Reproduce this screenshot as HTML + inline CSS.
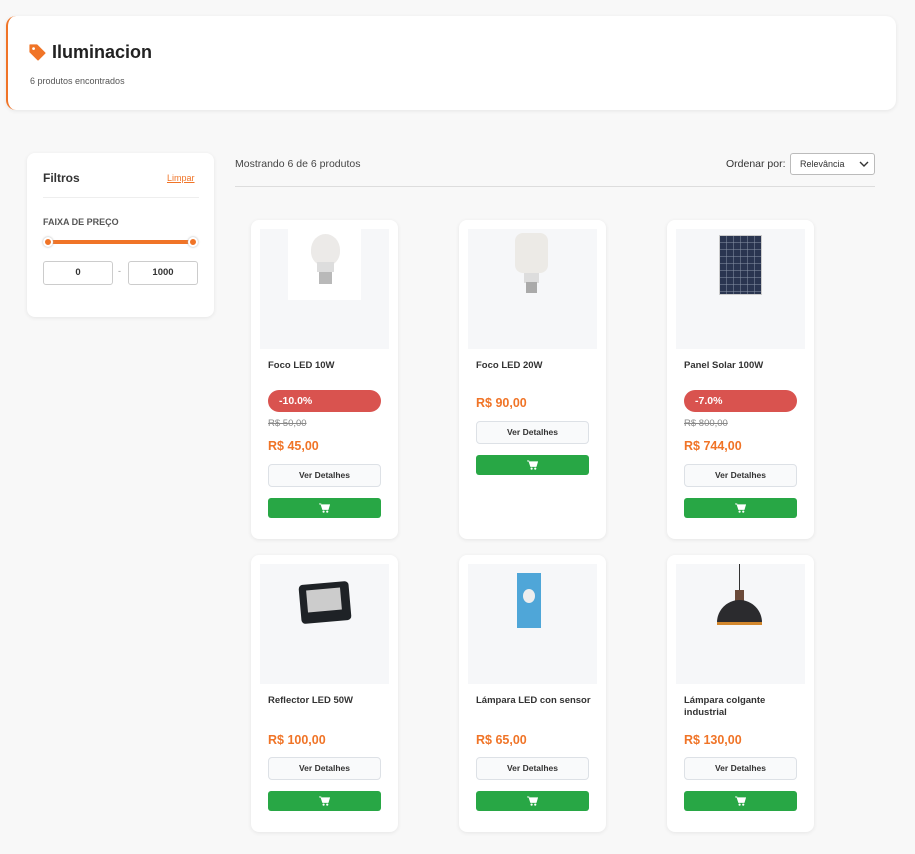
<!DOCTYPE html>
<html><head><meta charset="utf-8"><style>
*{box-sizing:border-box;margin:0;padding:0}
body{width:915px;height:854px;background:#f8f8f8;font-family:"Liberation Sans",Arial,sans-serif;position:relative;overflow:hidden;color:#333}
.abs{position:absolute}
.hdr{left:6px;top:16px;width:890px;height:94px;background:#fff;border-radius:10px;border-left:2px solid #f07427;box-shadow:0 1px 4px rgba(0,0,0,.08)}
.side{left:27px;top:153px;width:187px;height:164px;background:#fff;border-radius:8px;box-shadow:0 1px 4px rgba(0,0,0,.08)}
.card{position:absolute;width:147px;background:#fff;border-radius:8px;box-shadow:0 1px 4px rgba(0,0,0,.08)}
.img{position:absolute;left:9px;top:9px;width:129px;height:120px;background:#f6f7f9;overflow:hidden}
.name{position:absolute;left:17px;font-size:9.5px;font-weight:bold;color:#333;line-height:12px;width:115px}
.badge{position:absolute;left:17px;width:113px;height:22px;border-radius:11px;background:#d9534f;color:#fff;font-weight:bold;font-size:10.5px;line-height:22px;padding-left:11px}
.old{position:absolute;left:17px;font-size:9.5px;color:#888;text-decoration:line-through}
.price{position:absolute;left:17px;font-size:12.5px;font-weight:bold;color:#f07427}
.ver{position:absolute;left:17px;width:113px;height:23px;border:1px solid #dde1e6;border-radius:4px;background:#f9fafb;font-size:8.5px;font-weight:bold;text-align:center;line-height:21px;color:#333}
.cart{position:absolute;left:17px;width:113px;height:20px;border-radius:3px;background:#28a745;display:flex;align-items:center;justify-content:center}
</style></head><body>
<div class="abs hdr">
 <svg class="abs" style="left:21px;top:28px" width="17" height="17" viewBox="0 0 16 16"><path d="M1 1h6.5l7.5 7.5-6.5 6.5L1 7.5z" fill="#f07427" stroke="#f07427" stroke-linejoin="round" stroke-width="1.2"/><circle cx="4.3" cy="4.3" r="1.3" fill="#fff"/></svg>
 <div class="abs" style="left:44px;top:26px;font-size:18px;font-weight:bold;color:#222">Iluminacion</div>
 <div class="abs" style="left:22px;top:60px;font-size:9px;color:#555">6 produtos encontrados</div>
</div>
<div class="abs side">
 <div class="abs" style="left:16px;top:18px;font-size:12px;font-weight:bold;color:#333">Filtros</div>
 <div class="abs" style="left:140px;top:20px;font-size:9px;color:#f07427;text-decoration:underline">Limpar</div>
 <div class="abs" style="left:16px;top:44px;width:156px;height:1px;background:#eee"></div>
 <div class="abs" style="left:16px;top:64px;font-size:9px;font-weight:bold;color:#555">FAIXA DE PREÇO</div>
 <div class="abs" style="left:20px;top:87px;width:146px;height:4px;background:#f07427;border-radius:2px"></div>
 <div class="abs" style="left:16px;top:84px;width:10px;height:10px;border-radius:50%;background:#f07427;border:2px solid #fff;box-shadow:0 0 2px #aaa"></div>
 <div class="abs" style="left:161px;top:84px;width:10px;height:10px;border-radius:50%;background:#f07427;border:2px solid #fff;box-shadow:0 0 2px #aaa"></div>
 <div class="abs" style="left:16px;top:108px;width:70px;height:24px;border:1px solid #ccc;border-radius:3px;font-size:9.5px;font-weight:bold;text-align:center;line-height:22px">0</div>
 <div class="abs" style="left:91px;top:113px;font-size:9px;color:#999">-</div>
 <div class="abs" style="left:101px;top:108px;width:70px;height:24px;border:1px solid #ccc;border-radius:3px;font-size:9.5px;font-weight:bold;text-align:center;line-height:22px">1000</div>
</div>
<div class="abs" style="left:235px;top:158px;font-size:10.5px;color:#444">Mostrando 6 de 6 produtos</div>
<div class="abs" style="left:726px;top:158px;font-size:10.5px;color:#333">Ordenar por:</div>
<div class="abs" style="left:790px;top:153px;width:85px;height:22px;border:1px solid #bbb;border-radius:3px;background:#fff;font-size:9px;line-height:20px;padding-left:9px">Relevância
<svg class="abs" style="right:5px;top:6px" width="10" height="8" viewBox="0 0 10 8"><path d="M1 2l4 4 4-4" stroke="#333" stroke-width="1.4" fill="none"/></svg></div>
<div class="abs" style="left:235px;top:186px;width:640px;height:1px;background:#ddd"></div>

<!-- Row 1 -->
<div class="card" style="left:251px;top:220px;height:319px">
 <div class="img"><div class="abs" style="left:28px;top:0;width:73px;height:71px;background:#fff"></div>
  <div class="abs" style="left:51px;top:5px;width:29px;height:32px;border-radius:50% 50% 45% 45%;background:#eceae8"></div>
  <div class="abs" style="left:57px;top:33px;width:17px;height:10px;background:#ddd"></div>
  <div class="abs" style="left:59px;top:43px;width:13px;height:12px;background:#b9b9b9"></div></div>
 <div class="name" style="top:140px">Foco LED 10W</div>
 <div class="badge" style="top:170px">-10.0%</div>
 <div class="old" style="top:198px">R$ 50,00</div>
 <div class="price" style="top:219px">R$ 45,00</div>
 <div class="ver" style="top:244px">Ver Detalhes</div>
 <div class="cart" style="top:278px"><svg width="11" height="10" viewBox="0 0 12 11"><path d="M0 1h2l2 6h6l1.5-5H3" fill="#fff" stroke="#fff"/><circle cx="5" cy="9.5" r="1.2" fill="#fff"/><circle cx="9" cy="9.5" r="1.2" fill="#fff"/></svg></div>
</div>
<div class="card" style="left:459px;top:220px;height:319px">
 <div class="img"><div class="abs" style="left:47px;top:4px;width:33px;height:40px;border-radius:8px;background:#eceae6"></div>
  <div class="abs" style="left:56px;top:44px;width:15px;height:10px;background:#ddd"></div>
  <div class="abs" style="left:58px;top:53px;width:11px;height:11px;background:#aaa"></div></div>
 <div class="name" style="top:140px">Foco LED 20W</div>
 <div class="price" style="top:176px">R$ 90,00</div>
 <div class="ver" style="top:201px">Ver Detalhes</div>
 <div class="cart" style="top:235px"><svg width="11" height="10" viewBox="0 0 12 11"><path d="M0 1h2l2 6h6l1.5-5H3" fill="#fff" stroke="#fff"/><circle cx="5" cy="9.5" r="1.2" fill="#fff"/><circle cx="9" cy="9.5" r="1.2" fill="#fff"/></svg></div>
</div>
<div class="card" style="left:667px;top:220px;height:319px">
 <div class="img"><div class="abs" style="left:43px;top:6px;width:43px;height:60px;background:#2a3550;border:1px solid #ccc;background-image:linear-gradient(90deg,transparent 6px,#8a95a8 1px,transparent 7px),linear-gradient(transparent 6px,#8a95a8 1px,transparent 7px);background-size:7px 7px"></div></div>
 <div class="name" style="top:140px">Panel Solar 100W</div>
 <div class="badge" style="top:170px">-7.0%</div>
 <div class="old" style="top:198px">R$ 800,00</div>
 <div class="price" style="top:219px">R$ 744,00</div>
 <div class="ver" style="top:244px">Ver Detalhes</div>
 <div class="cart" style="top:278px"><svg width="11" height="10" viewBox="0 0 12 11"><path d="M0 1h2l2 6h6l1.5-5H3" fill="#fff" stroke="#fff"/><circle cx="5" cy="9.5" r="1.2" fill="#fff"/><circle cx="9" cy="9.5" r="1.2" fill="#fff"/></svg></div>
</div>

<!-- Row 2 -->
<div class="card" style="left:251px;top:555px;height:277px">
 <div class="img"><div class="abs" style="left:40px;top:19px;width:50px;height:39px;background:#1e2226;border-radius:4px;transform:rotate(-5deg)"></div>
  <div class="abs" style="left:47px;top:25px;width:34px;height:22px;background:#ccc;transform:rotate(-5deg)"></div></div>
 <div class="name" style="top:140px">Reflector LED 50W</div>
 <div class="price" style="top:178px">R$ 100,00</div>
 <div class="ver" style="top:202px">Ver Detalhes</div>
 <div class="cart" style="top:236px"><svg width="11" height="10" viewBox="0 0 12 11"><path d="M0 1h2l2 6h6l1.5-5H3" fill="#fff" stroke="#fff"/><circle cx="5" cy="9.5" r="1.2" fill="#fff"/><circle cx="9" cy="9.5" r="1.2" fill="#fff"/></svg></div>
</div>
<div class="card" style="left:459px;top:555px;height:277px">
 <div class="img"><div class="abs" style="left:49px;top:9px;width:24px;height:55px;background:#4fa6d8"></div>
  <div class="abs" style="left:55px;top:25px;width:12px;height:14px;border-radius:50%;background:#eee"></div></div>
 <div class="name" style="top:140px">Lámpara LED con sensor</div>
 <div class="price" style="top:178px">R$ 65,00</div>
 <div class="ver" style="top:202px">Ver Detalhes</div>
 <div class="cart" style="top:236px"><svg width="11" height="10" viewBox="0 0 12 11"><path d="M0 1h2l2 6h6l1.5-5H3" fill="#fff" stroke="#fff"/><circle cx="5" cy="9.5" r="1.2" fill="#fff"/><circle cx="9" cy="9.5" r="1.2" fill="#fff"/></svg></div>
</div>
<div class="card" style="left:667px;top:555px;height:277px">
 <div class="img"><div class="abs" style="left:63px;top:0;width:1px;height:28px;background:#333"></div>
  <div class="abs" style="left:59px;top:26px;width:9px;height:12px;background:#6b4a3a"></div>
  <div class="abs" style="left:41px;top:36px;width:45px;height:24px;border-radius:24px 24px 0 0;background:#2b2b2e"></div>
  <div class="abs" style="left:41px;top:58px;width:45px;height:3px;background:#d2872d"></div></div>
 <div class="name" style="top:140px">Lámpara colgante industrial</div>
 <div class="price" style="top:178px">R$ 130,00</div>
 <div class="ver" style="top:202px">Ver Detalhes</div>
 <div class="cart" style="top:236px"><svg width="11" height="10" viewBox="0 0 12 11"><path d="M0 1h2l2 6h6l1.5-5H3" fill="#fff" stroke="#fff"/><circle cx="5" cy="9.5" r="1.2" fill="#fff"/><circle cx="9" cy="9.5" r="1.2" fill="#fff"/></svg></div>
</div>
</body></html>
